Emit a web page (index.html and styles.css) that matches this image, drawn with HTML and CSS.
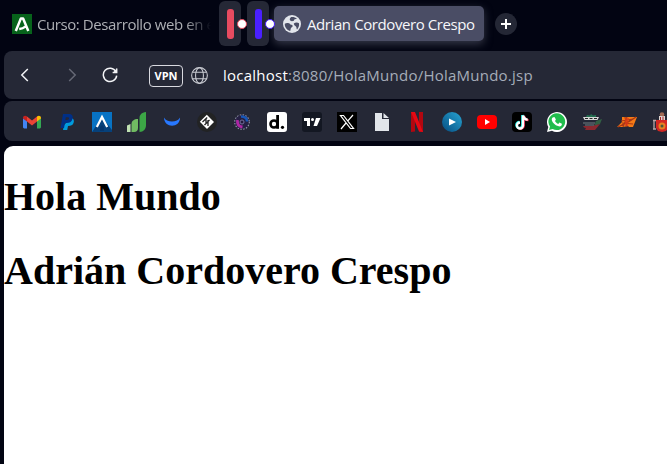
FILE: index.html
```html
<!DOCTYPE html>
<html lang="es">
<head>
<meta charset="utf-8">
<title>Adrian Cordovero Crespo</title>
<link rel="stylesheet" href="styles.css">
</head>
<body>
<div class="browser">
  <header class="tabs">
    <div class="tab tab-idle">
      <svg class="fav" viewBox="0 0 20 20"><path fill="#07631b" d="M0 0h20v20H0z"/><path d="M3.800 17 8.900 4.400h2.200L16.300 17M7.200 15c3-.3 4.500-1 6.100-2.400" fill="none" stroke="#fff" stroke-width="2.500" stroke-linejoin="round"/></svg>
      <span class="tab-title">Curso: Desarrollo web en e</span>
    </div>
    <div class="island red"><i class="bar"></i><i class="dot"></i></div>
    <div class="island blue"><i class="bar"></i><i class="dot"></i></div>
    <div class="tab tab-active">
      <svg class="world" viewBox="0 0 18 18"><circle cx="9" cy="9" r="9" fill="#e2e5eb"/><path fill="#4a4d65" d="M1.800 8.800C3.500 7.700 6 8 7.200 9.200c.8.800 2.300.3 2.500 1.600.2 1.200-1.200 1.300-1.700 2.200-.5 1-.3 2.300-.9 3C4 15.200 1.500 12.300 1.800 8.800zM8.200 2c2.300-.3 4.300.4 5.800 1.700l-2.200.6c-.8.300-.6 1.500-1.500 1.700-1.200.3-2.500.2-3.300-.8C6.400 4.300 7 2.800 8.200 2zM10.800 8.500c1.500-1.200 3.800-1.400 5.200-.2.400 2.200-.3 4.500-1.900 6.100-.8-.5-.3-2-1-2.700-.8-.8-2.300-1.500-2.300-3.200z"/></svg>
      <span class="active-title">Adrian Cordovero Crespo</span>
    </div>
    <div class="plus"><svg viewBox="0 0 22 22"><path d="M11 6v10M6 11h10" stroke="#fff" stroke-width="2"/></svg></div>
  </header>
  <nav class="toolbar">
    <svg class="nav-icon back" viewBox="0 0 16 16"><path d="M10.800 2 4.800 8l6 6"/></svg>
    <svg class="nav-icon forward" viewBox="0 0 16 16"><path d="M5.200 2l6 6-6 6"/></svg>
    <svg class="nav-icon reload" viewBox="0 0 16 16"><path d="M13.900 4.600A6.700 6.700 0 1 0 14.700 8.600M14.700 1.500v4h-4"/><path class="tip" d="M15 1.500V6h-4.500z"/></svg>
    <span class="vpn">VPN</span>
    <svg class="globe" viewBox="0 0 16 16"><circle cx="8" cy="8" r="7.400"/><ellipse cx="8" cy="8" rx="3.700" ry="7.400"/><path d="M1.500 5h13M1.500 11h13"/></svg>
    <span class="url"><b>localhost</b>:8080/HolaMundo/HolaMundo.jsp</span>
  </nav>
  <div class="bookmarks">
    <svg viewBox="0 0 20 20"><path fill="#4285f4" d="M1 6v9.500l1 1h3V9z"/><path fill="#34a853" d="M15 9v7.500h3l1-1V6z"/><path fill="#ea4335" d="m5 4.500 5 4 5-4v5l-5 4-5-4z"/><path fill="#c5221f" d="M1 6c0-2.500 2.500-3 4-1.500v5L1 6.500z"/><path fill="#fbbc04" d="M15 4.500c1.500-1.500 4-1 4 1.500v.5l-4 3z"/></svg>
    <svg viewBox="0 0 20 20"><path fill="#009cde" d="M14 6c3 .5 3.300 3 2.500 5-.8 2.300-2.500 3-5.500 3l-.8 4H6l1-5z"/><path fill="#002f86" fill-rule="evenodd" d="M6 2h6c3.500 0 4.300 2.500 3.400 5.200-.8 2.700-2.900 3.800-5.900 3.800H8l-1 5H3.500zM8.800 5.200 8.300 8h1.500c1.400 0 2.200-.6 2.200-1.700 0-.8-.5-1.100-1.500-1.100z"/></svg>
    <svg viewBox="0 0 20 20"><path fill="#0873c4" d="M0 0h20v20H0z"/><path fill="#06417b" d="m10 5 10 13v2H1zM0 20 10 5 5 20"/><path d="m4.800 15 5.200-10 5.200 10" fill="none" stroke="#fff" stroke-width="2.200"/><path d="m8 15 2-2 2 2v4H8z" fill="#06366c"/></svg>
    <svg viewBox="0 0 20 20"><path fill="#c0e1b2" d="M0 13.500 3.500 12v8H0z"/><path fill="#71bb62" d="M4.500 12c0-3 2.500-5 6.500-5v9c0 2.500-1.500 4-4 4H4.500z"/><path fill="#3ca646" d="M12.500 6c0-3 2-5.500 6.500-6v13c0 4-2.500 7-6.500 7z"/></svg>
    <svg viewBox="0 0 20 20"><path fill="#2878ff" d="M2 5.500c2.200 5.200 13.800 5.200 16 0 .2 11-16 11-16 0z"/></svg>
    <svg viewBox="0 0 20 20"><circle cx="10" cy="10" r="10" fill="#222324"/><path fill="#fff" d="m2.800 9.800 7-7L17 10l-7 7z"/><path d="m5.500 10 4.700-4.500M9 6.500v5M7.500 13l5-5M11 8v6" stroke="#222324" stroke-width="1.300" fill="none"/></svg>
    <svg viewBox="0 0 20 20"><circle cx="10" cy="10" r="7" fill="#252043"/><circle cx="10" cy="10" r="7.300" fill="none" stroke="#9495b0" stroke-width="1.100" stroke-dasharray="1.500 1.400"/><path d="M5.500 8c-.5 4 1 6.500 5 7" stroke="#ae27a4" stroke-width="2.800" fill="none"/><path d="M9 4.500c4 0 6 2 6 5" stroke="#1757b7" stroke-width="2.500" fill="none"/><circle cx="10" cy="10" r="2" fill="#22183a" stroke="#746f9d"/></svg>
    <svg viewBox="0 0 20 20"><rect width="20" height="20" rx="3" fill="#fff"/><circle cx="7" cy="12" r="3.500" fill="none" stroke="#050505" stroke-width="2.600"/><path d="M9.200 3H12v13.800H9.200z"/><circle cx="15.500" cy="15.300" r="1.600"/></svg>
    <svg viewBox="0 0 20 20"><rect width="20" height="20" rx="3" fill="#131722"/><path fill="#fff" d="M2 6h6v8H5V9H2zM14 6h4.500L15 14h-3.500z"/><circle cx="10.500" cy="7.500" r="1.500" fill="#fff"/></svg>
    <svg viewBox="0 0 20 20"><path d="M0 0h20v20H0z"/><path d="M3.500 3.500h3l10 13h-3zM16 3l-5.400 6.200M9 11l-5 6" fill="none" stroke="#fff" stroke-width="1.200"/></svg>
    <svg viewBox="0 0 20 20"><path fill="#e2e5ea" d="M3 1h7v6h7v12H3zM11.500 1 17 6h-5.500z"/></svg>
    <svg viewBox="0 0 20 20"><path fill="#b20710" d="M4 0h4v19.500L4 20zM12 0h4v20l-4-.5z"/><path fill="#e50914" d="M4 0h4l8 20-4-.5z"/></svg>
    <svg viewBox="0 0 20 20"><defs><linearGradient id="play" x1="0" y1="1" x2="1" y2="0"><stop stop-color="#064c80"/><stop offset="1" stop-color="#27a5d3"/></linearGradient></defs><circle cx="10" cy="10" r="10" fill="url(#play)"/><path fill="#fff" d="m7 6.500 7 3.500-7 3.500z"/></svg>
    <svg viewBox="0 0 20 20"><rect y="3" width="20" height="14" rx="4" fill="#f00"/><path fill="#fff" d="m8 7 5 3-5 3z"/></svg>
    <svg viewBox="0 0 20 20"><rect width="20" height="20" rx="4"/><g fill="none" stroke-width="2.300"><path stroke="#25f4ee" d="M10.300 3v10a3 3 0 1 1-3-3M10.500 3c.4 2.500 2 4 4.500 4.200"/><path stroke="#fe2c55" d="M11.700 4v10a3 3 0 0 1-5 2M12 4c.4 2.500 2 4 4.500 4.200"/><path stroke="#fff" d="M11 3.500v10a3 3 0 1 1-3-3M11.200 3.500c.4 2.500 2 4 4.500 4.200"/></g></svg>
    <svg viewBox="0 0 20 20"><path fill="#fff" d="m0 20 1.300-5A10 10 0 1 1 5 18.700z"/><path fill="#20bd4c" d="m2 18 1-3.400A8.400 8.400 0 1 1 5.700 17z"/><path fill="#fff" d="M6.200 5.200h1.600l1.100 2.500-.9 1.200c.9 1.600 1.700 2.300 3.300 3l1.100-1.300 2.500 1.200c.2 2-1.500 2.900-3.200 2.500-3.800-.8-7.400-4.700-6.900-7.300.1-.8.700-1.500 1.400-1.800z"/></svg>
    <svg viewBox="0 0 20 20"><path fill="#247052" d="m4 5 1-2 3 .5L9 2l2 1.500 3-.5v2z"/><path fill="#d8d8d7" d="M1 5h16l-1.500 3h-13z"/><path d="M3 6.500h3m1.500 0h3m1.500 0h3" stroke="#222"/><path fill="#326044" d="m14 9 6-2-2 5-6 2z"/><path fill="#8b2930" d="M1 14h9l8-2-5 6H3l1-2-2-.5z"/><path d="M1 11h12M3 13h9" stroke="#727e82"/></svg>
    <svg viewBox="0 0 20 20"><path fill="#f57a15" d="M5 5h15l-4 10h-4l-1-1-5 1H0l5-5z"/><path d="m1 15 12-6 6-4M6 15l4-10m0 10L8 5m-4 4 12-2m-11 4 11 1" stroke="#a83718" stroke-width="1.200"/><path d="M8 6h4l-1 8H8z" fill="#df3a16" opacity=".7"/></svg>
    <svg viewBox="0 0 20 20"><path fill="#d32722" d="M4 8h12v8l-2 3-4 1-4-1-2-3z"/><path d="M1 8.500h3m-2 0V17m14-8.500h3m-1 0V17M1 17h3m12 0h3" stroke="#b5a7a6" stroke-width="1.300"/><circle cx="10" cy="2.500" r="2.300" fill="#a26b55"/><path fill="#ded4d0" d="M7 4h6v4H7z"/><path d="M8.500 5v3M11 4.500V8" stroke="#a92428"/><circle cx="10" cy="14" r="3.500" fill="#e6801f"/><circle cx="10" cy="14" r="1.500" fill="#49573b"/></svg>
  </div>
  <main class="page">
    <h1>Hola Mundo</h1>
    <h1 class="name">Adrián Cordovero Crespo</h1>
  </main>
</div>
</body>
</html>
```

FILE: styles.css
```css
* { box-sizing: border-box; }
body { margin: 0; overflow: hidden; }
.browser {
  display: flex;
  flex-direction: column;
  height: 464px;
  padding-left: 4px;
  background: #020412;
  font-family: "Open Sans", "Noto Sans", sans-serif;
}
svg { display: block; flex: none; }
.tabs { display: flex; flex: none; height: 51px; padding-left: 8px; }
.tab { display: flex; align-items: center; white-space: nowrap; }
.tab-idle { width: 208px; height: 48px; gap: 5px; }
.fav { width: 20px; height: 20px; }
.tab-title {
  width: 182px;
  color: #adafb4;
  font-size: 15px;
  letter-spacing: -0.42px;
  mask-image: linear-gradient(90deg, #000 148px, transparent 174px);
}
.island {
  position: relative;
  width: 22px;
  height: 45px;
  margin: 1px 6px 0 0;
  padding: 8px;
  border-radius: 6px;
  background: #252836;
}
.island.red { margin-left: -1px; }
.island.blue { margin-right: 5px; }
.bar { display: block; width: 7px; height: 30px; border-radius: 3px; background: var(--accent); }
.dot {
  position: absolute;
  z-index: 2;
  top: 18px;
  right: -6px;
  width: 10px;
  height: 10px;
  border: 1.5px solid var(--accent);
  border-radius: 50%;
  background: #fff;
}
.red { --accent: #e74b60; }
.blue { --accent: #4a20ff; }
.tab-active {
  width: 210px;
  height: 35px;
  margin-top: 6px;
  padding-left: 9px;
  gap: 6px;
  border-radius: 5px;
  background: #4a4d65;
  box-shadow: 0 3px 8px #363949;
}
.world { width: 18px; height: 18px; }
.active-title { color: #f7f7fa; font-size: 15px; letter-spacing: -0.41px; }
.plus { width: 22px; height: 22px; margin: 13px 0 0 11px; border-radius: 50%; background: #242735; }
.toolbar {
  display: flex;
  align-items: center;
  flex: none;
  position: relative;
  height: 48px;
  padding-left: 13px;
  border-radius: 8px 0 0 8px;
  background: #252836;
}
.nav-icon { width: 16px; height: 16px; fill: none; stroke: #f3f4f7; stroke-width: 1.5; }
.forward { margin-left: 31px; stroke: #666976; }
.reload { margin-left: 22px; }
.reload .tip { fill: #f3f4f7; stroke: none; }
.vpn {
  display: flex;
  align-items: center;
  justify-content: center;
  width: 34px;
  height: 22px;
  margin: 1px 0 0 31px;
  border: 1px solid #d8d9df;
  border-radius: 4px;
  color: #fff;
  font-size: 11px;
  font-weight: 700;
}
.globe { width: 17px; height: 17px; margin-left: 8px; fill: none; stroke: #c9cbd2; stroke-width: 1; }
.url { margin-left: 15px; color: #a5adb9; font-size: 15px; letter-spacing: 0.24px; white-space: nowrap; }
.url b { color: #fff; font-weight: 400; }
.bookmarks {
  display: grid;
  grid-template-columns: repeat(19, 20px);
  column-gap: 15px;
  align-items: center;
  flex: none;
  height: 40px;
  margin-top: 2px;
  padding: 1px 0 0 18px;
  border-radius: 8px 0 0 8px;
  background: #252836;
}
.bookmarks svg { width: 20px; height: 20px; }
.page {
  flex: 1;
  margin-top: 5px;
  padding-top: 28px;
  border-radius: 9px 0 0 0;
  background: #fff;
  color: #000;
  font-family: "Liberation Serif", serif;
}
h1 { margin: 0 0 28px; font-size: 40px; line-height: 46px; font-weight: 700; white-space: nowrap; }
```
